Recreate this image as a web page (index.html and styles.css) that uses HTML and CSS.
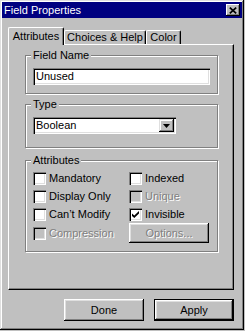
FILE: index.html
```html
<!DOCTYPE html>
<html lang="en">
<head>
  <meta charset="UTF-8">
  <meta name="viewport" content="width=device-width, initial-scale=1.0">
  <title>Field Properties</title>
  <link rel="stylesheet" href="styles.css">
</head>
<body>
  <div class="window">
    <div class="titlebar">
      <span class="title">Field Properties</span>
      <button class="close" aria-label="Close">
        <svg width="8" height="7" viewBox="0 0 8 7"><path d="M0.8 0.6L7.2 6.4M7.2 0.6L0.8 6.4" stroke="#000" stroke-width="1.7"/></svg>
      </button>
    </div>

    <div class="tabs">
      <div class="tab active tab-attr">Attributes</div>
      <div class="tab tab-help">Choices &amp; Help</div>
      <div class="tab tab-color">Color</div>
    </div>

    <div class="panel">
      <div class="group group-name">
        <div class="group-title">Field Name</div>
        <div class="textbox">Unused</div>
      </div>

      <div class="group group-type">
        <div class="group-title">Type</div>
        <div class="combo">
          <span class="combo-value">Boolean</span>
          <span class="combo-btn">
            <svg width="7" height="4" viewBox="0 0 7 4"><path d="M0 0h7L3.5 4z" fill="#000"/></svg>
          </span>
        </div>
      </div>

      <div class="group group-attr">
        <div class="group-title">Attributes</div>
        <div class="checks">
          <div class="check"><span class="box"></span>Mandatory</div>
          <div class="check"><span class="box"></span>Indexed</div>
          <div class="check"><span class="box"></span>Display Only</div>
          <div class="check disabled"><span class="box"></span>Unique</div>
          <div class="check"><span class="box"></span>Can’t Modify</div>
          <div class="check">
            <span class="box">
              <svg width="7" height="7" viewBox="0 0 7 7"><path d="M0 2.5L2.3 4.6L7 0V2.6L2.3 7L0 4.9z" fill="#000"/></svg>
            </span>Invisible
          </div>
          <div class="check disabled"><span class="box"></span>Compression</div>
          <button class="btn options" disabled>Options...</button>
        </div>
      </div>
    </div>

    <div class="actions">
      <button class="btn">Done</button>
      <button class="btn default">Apply</button>
    </div>
  </div>
</body>
</html>
```

FILE: styles.css
```css
* {
  box-sizing: border-box;
}

body {
  margin: 0;
  background: #c0c0c0;
  font-family: "Liberation Sans", Arial, sans-serif;
  font-size: 11px;
  color: #000;
}

.window {
  width: 244px;
  height: 330px;
  padding: 2px;
  background: #c0c0c0;
  box-shadow: inset -1px -1px #000, inset 1px 1px #dfdfdf,
              inset -2px -2px #808080, inset 2px 2px #fff;
}

.titlebar {
  height: 16px;
  background: #000080;
  color: #fff;
  display: flex;
  align-items: center;
  justify-content: space-between;
  padding: 0 2px;
}

.close {
  width: 14px;
  height: 12px;
  padding: 0;
  border: 0;
  background: #c0c0c0;
  display: flex;
  align-items: center;
  justify-content: center;
  box-shadow: inset -1px -1px #000, inset 1px 1px #fff, inset -2px -2px #808080;
}

/* tabs */
.tabs {
  display: flex;
  align-items: flex-end;
  height: 17px;
  margin: 9px 0 0 6px;
}

.tab {
  height: 14px;
  line-height: 13px;
  text-align: center;
  background: #c0c0c0;
  border-top: 1px solid #fff;
  border-left: 1px solid #fff;
  border-right: 1px solid #000;
  border-radius: 2px 2px 0 0;
  box-shadow: inset -1px 0 #808080;
}

.tab.active {
  height: 18px;
  line-height: 16px;
  margin-bottom: -1px;
  position: relative;
  z-index: 1;
}

.tab-attr { width: 56px; }
.tab-help { width: 82px; }
.tab-color { width: 35px; }

.panel {
  width: 226px;
  height: 246px;
  margin-left: 6px;
  padding: 10px 15px 0 16px;
  border-top: 1px solid #fff;
  border-left: 1px solid #fff;
  border-right: 1px solid #000;
  border-bottom: 1px solid #000;
  box-shadow: inset -1px -1px #808080;
}

/* group boxes */
.group {
  border: 1px solid #808080;
  box-shadow: inset 1px 1px #fff, 1px 1px #fff;
  padding: 0 7px 8px 7px;
}

.group-title {
  width: fit-content;
  margin: -7px 0 0 -2px;
  padding: 0 2px;
  line-height: 13px;
  background: #c0c0c0;
}

.group-type {
  margin-top: 10px;
  padding-bottom: 13px;
}

.group-attr {
  margin-top: 12px;
}

.sunken {
  box-shadow: inset 1px 1px #808080, inset 2px 2px #000,
              inset -1px -1px #fff, inset -2px -2px #dfdfdf;
}

.textbox {
  height: 17px;
  margin-top: 6px;
  padding-left: 3px;
  line-height: 17px;
  background: #fff;
  box-shadow: inset 1px 1px #808080, inset 2px 2px #000,
              inset -1px -1px #fff, inset -2px -2px #dfdfdf;
}

.combo {
  width: 143px;
  height: 17px;
  margin-top: 6px;
  padding: 2px;
  display: flex;
  background: #fff;
  box-shadow: inset 1px 1px #808080, inset 2px 2px #000,
              inset -1px -1px #fff, inset -2px -2px #dfdfdf;
}

.combo-value {
  flex: 1;
  padding-left: 1px;
  line-height: 13px;
}

.combo-btn {
  width: 15px;
  height: 13px;
  display: flex;
  align-items: center;
  justify-content: center;
  background: #c0c0c0;
  box-shadow: inset -1px -1px #000, inset 1px 1px #dfdfdf,
              inset -2px -2px #808080, inset 2px 2px #fff;
}

/* checkboxes */
.checks {
  display: grid;
  grid-template-columns: 96px 1fr;
  grid-template-rows: 18px 18px 18px 20px;
  margin-top: 2px;
}

.check {
  display: flex;
  align-items: center;
  gap: 3px;
}

.box {
  width: 13px;
  height: 13px;
  display: flex;
  align-items: center;
  justify-content: center;
  background: #fff;
  box-shadow: inset 1px 1px #808080, inset 2px 2px #000,
              inset -1px -1px #fff, inset -2px -2px #dfdfdf;
}

.check.disabled {
  color: #808080;
  text-shadow: 1px 1px #fff;
}

.check.disabled .box {
  background: #c0c0c0;
}

/* buttons */
.btn {
  width: 80px;
  height: 22px;
  padding: 0;
  border: 0;
  background: #c0c0c0;
  font: inherit;
  color: #000;
  box-shadow: inset -1px -1px #000, inset 1px 1px #fff,
              inset -2px -2px #808080, inset 2px 2px #dfdfdf;
}

.btn.options {
  height: 20px;
  color: #808080;
  text-shadow: 1px 1px #fff;
}

.btn.default {
  box-shadow: inset 0 0 0 1px #000, inset -2px -2px #000, inset 2px 2px #fff,
              inset -3px -3px #808080, inset 3px 3px #dfdfdf;
}

.actions {
  display: flex;
  justify-content: flex-end;
  gap: 10px;
  margin-top: 9px;
  padding-right: 8px;
}
```
